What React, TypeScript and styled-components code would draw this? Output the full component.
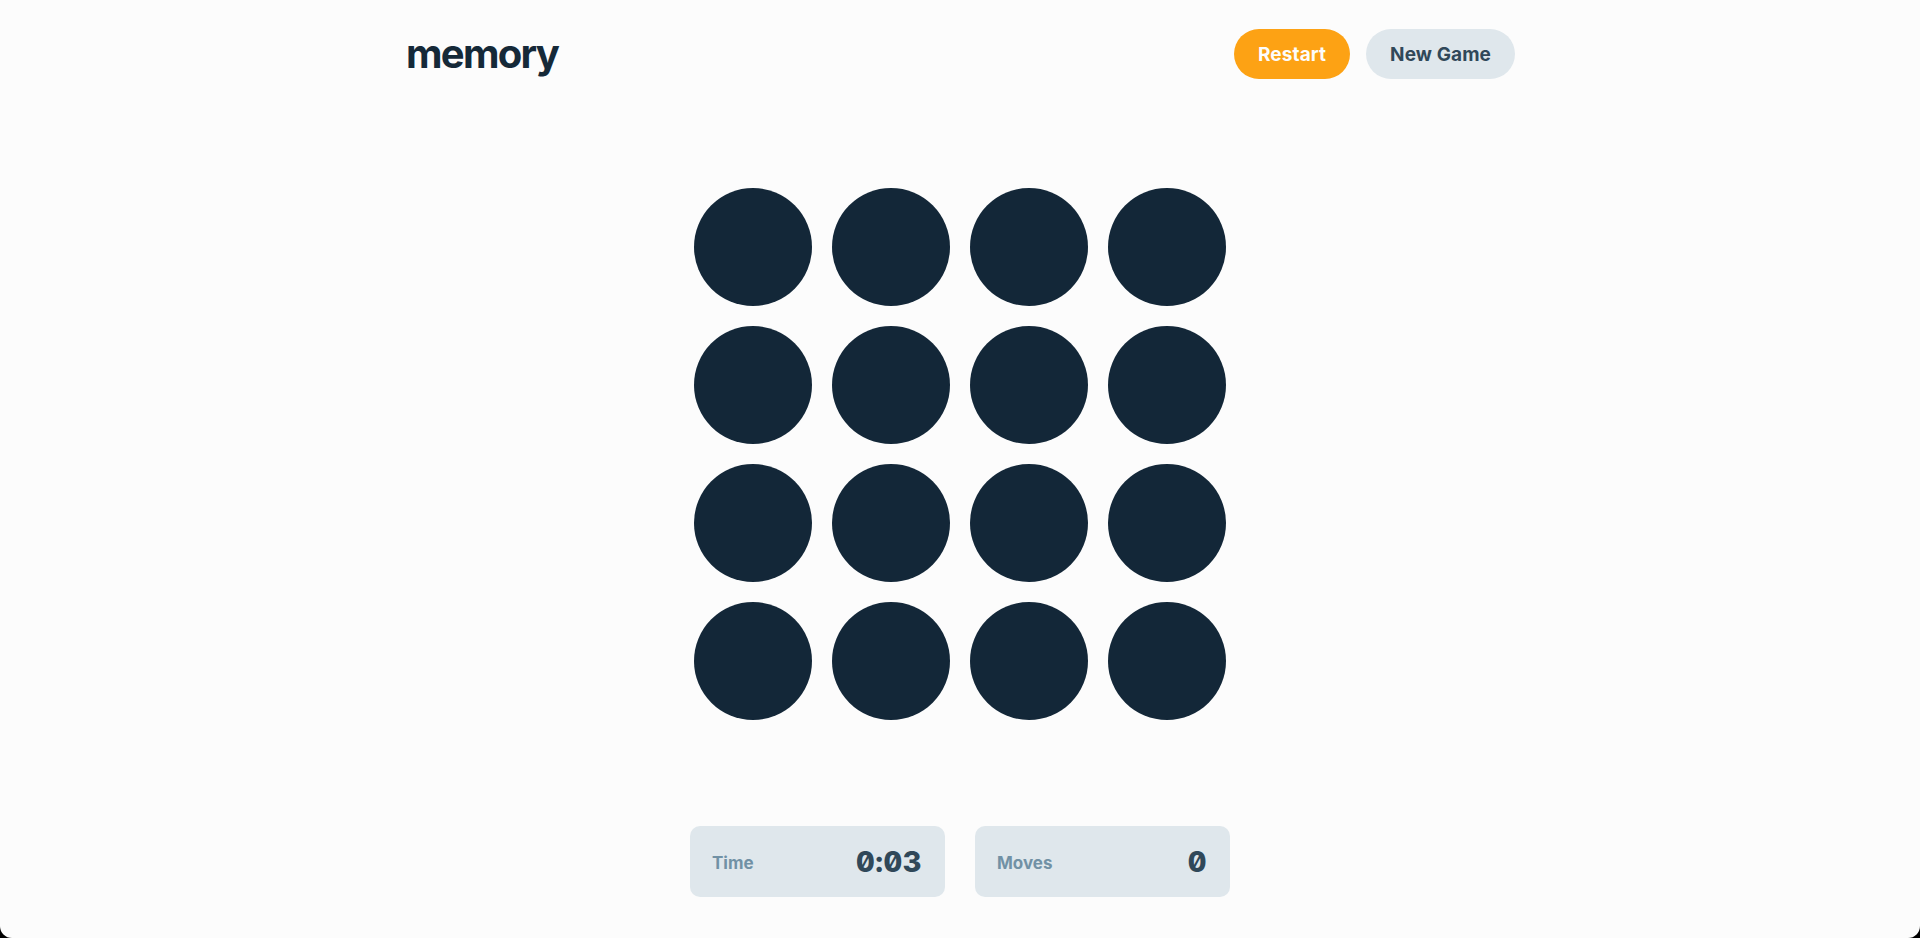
import React from "react";
import styled, { createGlobalStyle } from "styled-components";

const GlobalStyle = createGlobalStyle`
  html, body {
    margin: 0;
    padding: 0;
    background: #000000;
  }
  * { box-sizing: border-box; }
`;

const Page = styled.div`
  min-height: 938px;
  background: #fcfcfc;
  border-bottom-left-radius: 12px;
  border-bottom-right-radius: 12px;
  font-family: Inter, "Noto Sans", sans-serif;
  display: flex;
  flex-direction: column;
  align-items: center;
`;

const Container = styled.div`
  width: 1110px;
  display: flex;
  flex-direction: column;
  align-items: center;
`;

const Header = styled.header`
  width: 100%;
  display: flex;
  justify-content: space-between;
  align-items: center;
  padding-top: 29px;
`;

const Logo = styled.h1`
  margin: 0 0 0 1px;
  font-family: Inter, "Noto Sans", sans-serif;
  font-weight: 700;
  font-size: 40px;
  letter-spacing: -1.7px;
  color: #152938;
  line-height: 50px;
`;

const Actions = styled.div`
  display: flex;
  gap: 16px;
`;

const Button = styled.button<{ $primary?: boolean }>`
  height: 50px;
  padding: 0 24px;
  border: none;
  border-radius: 26px;
  font-family: Inter, "Noto Sans", sans-serif;
  font-weight: 700;
  font-size: 19px;
  letter-spacing: 0.1px;
  cursor: pointer;
  background: ${(p) => (p.$primary ? "#FDA214" : "#DFE7EC")};
  color: ${(p) => (p.$primary ? "#FCFCFC" : "#304859")};
`;

const Board = styled.div`
  margin-top: 109px;
  display: grid;
  grid-template-columns: repeat(4, 118px);
  grid-auto-rows: 118px;
  gap: 20px;
`;

const Disc = styled.button`
  width: 118px;
  height: 118px;
  border-radius: 50%;
  border: none;
  padding: 0;
  background: #132738;
  cursor: pointer;
`;

const Stats = styled.div`
  margin-top: 106px;
  display: flex;
  gap: 30px;
`;

const StatBox = styled.div`
  width: 255px;
  height: 71px;
  border-radius: 10px;
  background: #dfe7ec;
  display: flex;
  align-items: center;
  justify-content: space-between;
  padding: 0 23px 0 22px;
`;

const StatLabel = styled.span`
  font-family: Inter, "Noto Sans", sans-serif;
  font-weight: 700;
  font-size: 17px;
  color: #7191a5;
  padding-top: 2px;
`;

const StatValue = styled.span`
  font-family: Inter, "Noto Sans", sans-serif;
  font-weight: 800;
  font-size: 29px;
  font-feature-settings: "zero" 1, "tnum" 1;
  letter-spacing: 0.5px;
  color: #304859;
`;

export default function App() {
  const discs = Array.from({ length: 16 }, (_, i) => i);
  return (
    <>
      <GlobalStyle />
      <Page>
        <Container>
          <Header>
            <Logo>memory</Logo>
            <Actions>
              <Button $primary>Restart</Button>
              <Button>New Game</Button>
            </Actions>
          </Header>
          <Board>
            {discs.map((i) => (
              <Disc key={i} aria-label={`tile ${i + 1}`} />
            ))}
          </Board>
          <Stats>
            <StatBox>
              <StatLabel>Time</StatLabel>
              <StatValue>0:03</StatValue>
            </StatBox>
            <StatBox>
              <StatLabel>Moves</StatLabel>
              <StatValue>0</StatValue>
            </StatBox>
          </Stats>
        </Container>
      </Page>
    </>
  );
}
